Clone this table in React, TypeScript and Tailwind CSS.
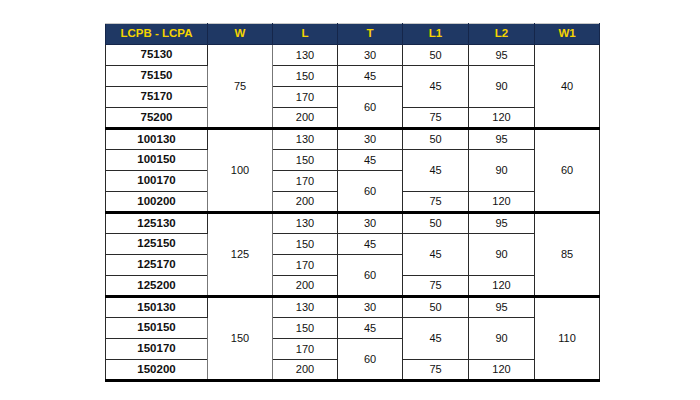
import React from 'react';

const groups = [
  { w: 75, w1: 40 },
  { w: 100, w1: 60 },
  { w: 125, w1: 85 },
  { w: 150, w1: 110 },
];

const headers = ['LCPB - LCPA', 'W', 'L', 'T', 'L1', 'L2', 'W1'];
const widths = ['w-[102px]', 'w-[65px]', 'w-[65px]', 'w-[65px]', 'w-[66px]', 'w-[66px]', 'w-[65px]'];

const cell = 'border border-[#2a2a2a] text-center align-middle p-0 text-[#111]';
const thick = 'border-b-[3px] border-b-black';

export default function App() {
  return (
    <div className="min-h-[400px] w-[700px] bg-white pt-[23px] pl-[105px] font-['Liberation_Sans',Arial,sans-serif]">
      <table className="border-collapse table-fixed w-[494px] text-[11px] text-[#111] leading-none">
        <colgroup>
          {widths.map((w, i) => (
            <col key={i} className={w} />
          ))}
        </colgroup>
        <thead>
          <tr className="h-[21px] bg-[#1f3864]">
            {headers.map((h) => (
              <th
                key={h}
                className="border border-[#15264a] border-t-[#c8c8c8] text-center align-middle p-0 text-[11.5px] font-bold text-[#f5d400]"
              >
                {h}
              </th>
            ))}
          </tr>
        </thead>
        <tbody>
          {groups.map((g) => {
            const code = (l: number) => `${g.w}${l}`;
            return (
              <React.Fragment key={g.w}>
                <tr className="h-[21px]">
                  <td className={`${cell} font-bold text-[11.5px]`}>{code(130)}</td>
                  <td rowSpan={4} className={`${cell} ${thick} border-x-[#777]`}>{g.w}</td>
                  <td className={cell}>130</td>
                  <td className={cell}>30</td>
                  <td className={cell}>50</td>
                  <td className={cell}>95</td>
                  <td rowSpan={4} className={`${cell} ${thick}`}>{g.w1}</td>
                </tr>
                <tr className="h-[21px]">
                  <td className={`${cell} font-bold text-[11.5px]`}>{code(150)}</td>
                  <td className={cell}>150</td>
                  <td className={cell}>45</td>
                  <td rowSpan={2} className={cell}>45</td>
                  <td rowSpan={2} className={cell}>90</td>
                </tr>
                <tr className="h-[21px]">
                  <td className={`${cell} font-bold text-[11.5px]`}>{code(170)}</td>
                  <td className={cell}>170</td>
                  <td rowSpan={2} className={`${cell} ${thick}`}>60</td>
                </tr>
                <tr className="h-[21px]">
                  <td className={`${cell} ${thick} font-bold text-[11.5px]`}>{code(200)}</td>
                  <td className={`${cell} ${thick}`}>200</td>
                  <td className={`${cell} ${thick}`}>75</td>
                  <td className={`${cell} ${thick}`}>120</td>
                </tr>
              </React.Fragment>
            );
          })}
        </tbody>
      </table>
    </div>
  );
}
